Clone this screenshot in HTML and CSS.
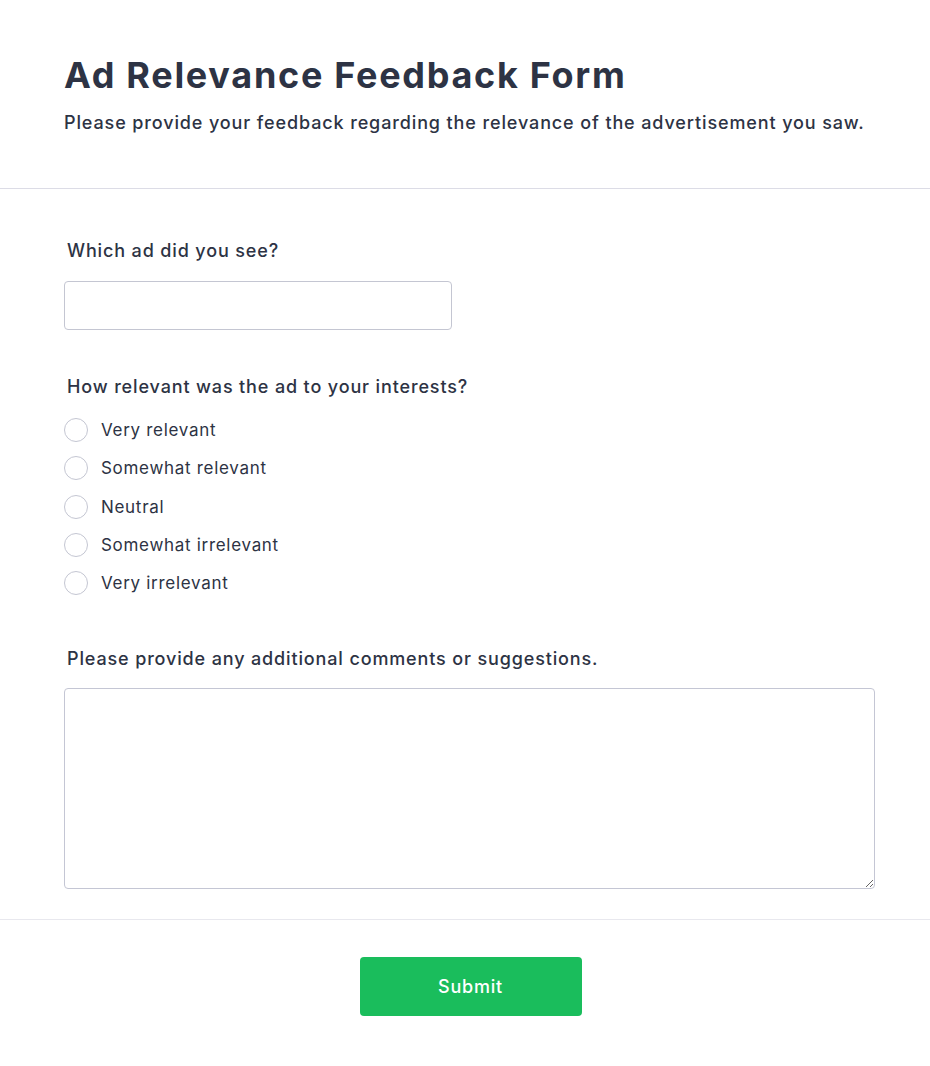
FILE: index.html
```html
<!DOCTYPE html>
<html lang="en">
<head>
<meta charset="utf-8">
<title>Ad Relevance Feedback Form</title>
<link rel="stylesheet" href="styles.css">
</head>
<body>
<header class="header">
  <h1 class="title">Ad Relevance Feedback Form</h1>
  <p class="subtitle">Please provide your feedback regarding the relevance of the advertisement you saw.</p>
</header>
<form class="form">
  <section class="fields">
    <div class="field">
      <label class="label" for="ad">Which ad did you see?</label>
      <input class="input" id="ad" type="text">
    </div>
    <div class="field field-radios">
      <div class="label">How relevant was the ad to your interests?</div>
      <div class="radios">
        <label class="radio"><span class="circle"></span><span>Very relevant</span></label>
        <label class="radio"><span class="circle"></span><span>Somewhat relevant</span></label>
        <label class="radio"><span class="circle"></span><span>Neutral</span></label>
        <label class="radio"><span class="circle"></span><span>Somewhat irrelevant</span></label>
        <label class="radio"><span class="circle"></span><span>Very irrelevant</span></label>
      </div>
    </div>
    <div class="field field-comments">
      <label class="label" for="comments">Please provide any additional comments or suggestions.</label>
      <textarea class="textarea" id="comments"></textarea>
    </div>
  </section>
  <div class="actions">
    <button class="submit" type="button">Submit</button>
  </div>
</form>
</body>
</html>
```

FILE: styles.css
```css
* { box-sizing: border-box; }
body {
  margin: 0;
  font-family: Inter, "Noto Sans", sans-serif;
  color: #2d3344;
  background: #fff;
}
.header {
  padding: 54px 55px 52px 64px;
  border-bottom: 1px solid #dcdce6;
}
.title {
  margin: 0;
  font-size: 36px;
  line-height: 43px;
  font-weight: 700;
  letter-spacing: 1.7px;
}
.subtitle {
  margin: 12px 0 0;
  font-size: 18px;
  line-height: 27px;
  font-weight: 500;
  letter-spacing: 0.88px;
}
.fields {
  padding: 48px 55px 30px 64px;
  border-bottom: 1px solid #e8e8ee;
}
.field { display: flex; flex-direction: column; }
.label {
  display: block;
  padding-left: 3px;
  font-size: 18px;
  line-height: 27px;
  font-weight: 500;
  letter-spacing: 0.86px;
}
.input {
  margin-top: 17px;
  width: 388px;
  height: 49px;
  border: 1px solid #c4c6d2;
  border-radius: 4px;
  font: inherit;
  outline: none;
}
.field-radios { margin-top: 43px; }
.radios {
  margin-top: 18px;
  display: flex;
  flex-direction: column;
  gap: 14.25px;
}
.radio {
  display: flex;
  align-items: center;
  gap: 13px;
  height: 24px;
  font-size: 17px;
  line-height: 24px;
  letter-spacing: 0.7px;
}
.circle {
  width: 24px;
  height: 24px;
  border: 1px solid #c4c6d2;
  border-radius: 50%;
  flex: none;
}
.field-comments { margin-top: 50px; }
.textarea {
  margin-top: 16px;
  width: 100%;
  height: 201px;
  border: 1px solid #c4c6d4;
  border-radius: 4px;
  font: inherit;
  outline: none;
  resize: vertical;
}
.actions {
  display: flex;
  justify-content: center;
  padding: 37px 53px 50px 64px;
}
.submit {
  width: 222px;
  height: 59px;
  border: none;
  border-radius: 4px;
  background: #1abd5c;
  color: #fff;
  font-family: inherit;
  font-size: 18px;
  font-weight: 500;
  letter-spacing: 0.8px;
}
```
